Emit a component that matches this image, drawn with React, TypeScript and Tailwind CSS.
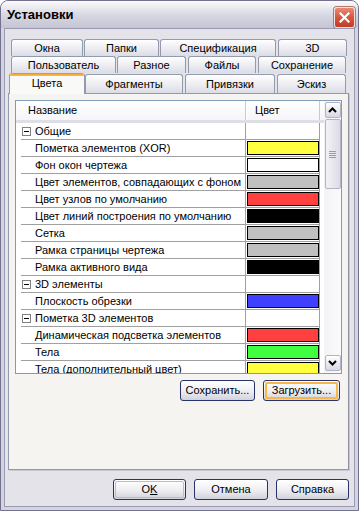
import React from "react";

type Row = { g?: boolean; t: string; c?: string };

const rows: Row[] = [
  { g: true, t: "Общие" },
  { t: "Пометка элементов (XOR)", c: "bg-[#ffff40]" },
  { t: "Фон окон чертежа", c: "bg-[#ffffff]" },
  { t: "Цвет элементов, совпадающих с фоном", c: "bg-[#c0c0c0]" },
  { t: "Цвет узлов по умолчанию", c: "bg-[#ff4040]" },
  { t: "Цвет линий построения по умолчанию", c: "bg-[#000000]" },
  { t: "Сетка", c: "bg-[#c0c0c0]" },
  { t: "Рамка страницы чертежа", c: "bg-[#c0c0c0]" },
  { t: "Рамка активного вида", c: "bg-[#000000]" },
  { g: true, t: "3D элементы" },
  { t: "Плоскость обрезки", c: "bg-[#4040ff]" },
  { g: true, t: "Пометка 3D элементов" },
  { t: "Динамическая подсветка элементов", c: "bg-[#ff4040]" },
  { t: "Тела", c: "bg-[#40ff40]" },
  { t: "Тела (дополнительный цвет)", c: "bg-[#ffff40]" },
];

function Tab({ label, cls }: { label: string; cls: string }) {
  return (
    <div
      className={`h-[17px] shrink-0 flex items-center justify-center rounded-t-[3px] border-x border-t border-[#919bac] bg-gradient-to-b from-white to-[#dcdce6] text-[11px] leading-none ${cls}`}
    >
      {label}
    </div>
  );
}

function Tab3({ label, cls }: { label: string; cls: string }) {
  return (
    <div
      className={`h-[19px] shrink-0 flex items-center justify-center rounded-t-[3px] border-x border-t border-[#919bac] bg-gradient-to-b from-white to-[#dcdce6] text-[11px] leading-none ${cls}`}
    >
      {label}
    </div>
  );
}

function Btn({ label, cls, inner }: { label: React.ReactNode; cls: string; inner?: string }) {
  return (
    <div
      className={`h-[21px] shrink-0 rounded-[3px] border border-[#27336a] bg-gradient-to-b from-white via-[#f0f0f4] to-[#d2d2dc] p-px ${cls}`}
    >
      <div
        className={`h-full w-full rounded-[2px] flex items-center justify-center text-[11px] leading-none ${inner ?? ""}`}
      >
        {label}
      </div>
    </div>
  );
}

function ScrollBtn({ up }: { up?: boolean }) {
  return (
    <div className="h-[16px] w-[16px] rounded-[2px] border border-[#b3b3c6] bg-gradient-to-b from-white to-[#d8d8e4] flex items-center justify-center">
      <svg width="9" height="6" viewBox="0 0 9 6">
        {up ? (
          <path d="M1 5 L4.5 1.5 L8 5" stroke="#000" strokeWidth="2" fill="none" />
        ) : (
          <path d="M1 1 L4.5 4.5 L8 1" stroke="#000" strokeWidth="2" fill="none" />
        )}
      </svg>
    </div>
  );
}

export default function App() {
  return (
    <div className="w-[359px] h-[511px] bg-white font-['Liberation_Sans',Arial,sans-serif] text-black">
      <div className="w-[359px] h-[511px] flex flex-col rounded-t-[8px] border border-[#72728f] bg-[#d4d4de] overflow-hidden">
        {/* title bar */}
        <div className="h-[27px] shrink-0 flex items-center pl-[6px] pr-[3px] bg-gradient-to-b from-[#fbfbfd] via-[#d9d9e4] to-[#c4c4d3]">
          <span className="text-[13px] font-bold leading-none">Установки</span>
          <div className="ml-auto mt-[5px] w-[21px] h-[21px] rounded-[3px] border border-[#f4e0dc] bg-gradient-to-b from-[#e98a70] via-[#d8553e] to-[#c33b25] flex items-center justify-center shadow-[0_0_0_1px_#b07a70]">
            <svg width="11" height="11" viewBox="0 0 11 11">
              <path d="M1.5 1.5 L9.5 9.5 M9.5 1.5 L1.5 9.5" stroke="#fff" strokeWidth="2.2" strokeLinecap="square" />
            </svg>
          </div>
        </div>
        {/* frame */}
        <div className="flex-1 flex flex-col px-[3px] pb-[3px]">
          <div className="flex-1 flex flex-col border border-[#9a9ab2] bg-[#e3e3e9] pt-[10px] pl-[3px] pr-[5px] pb-[6px]">
            {/* tabs */}
            <div className="flex pl-[3px]">
              <Tab label="Окна" cls="w-[72px]" />
              <Tab label="Папки" cls="w-[75px] ml-[1px]" />
              <Tab label="Спецификация" cls="w-[116px] ml-[1px]" />
              <Tab label="3D" cls="w-[69px] ml-[2px]" />
            </div>
            <div className="flex pl-[3px]">
              <Tab label="Пользователь" cls="w-[105px]" />
              <Tab label="Разное" cls="w-[69px] ml-[1px]" />
              <Tab label="Файлы" cls="w-[68px] ml-[2px]" />
              <Tab label="Сохранение" cls="w-[88px] ml-[2px]" />
            </div>
            <div className="flex items-end pl-[1px] relative z-10 -mb-px">
              <div className="h-[21px] w-[76px] shrink-0 rounded-t-[3px] border-x border-[#919bac] bg-[#f9f9f7] flex flex-col">
                <div className="h-[3px] rounded-t-[3px] bg-gradient-to-b from-[#e68b2c] to-[#ffc73c]" />
                <div className="flex-1 flex items-center justify-center text-[11px] leading-none pb-[3px]">Цвета</div>
              </div>
              <div className="flex-1 flex items-end mb-px">
                <Tab3 label="Фрагменты" cls="w-[98px]" />
                <Tab3 label="Привязки" cls="w-[90px] ml-[2px]" />
                <Tab3 label="Эскиз" cls="w-[69px] ml-[2px]" />
              </div>
            </div>
            {/* panel */}
            <div className="flex-1 flex flex-col border border-[#919bac] border-r-[#8f8f9f] bg-[#f5f4f0] px-[6px] pt-[6px] shadow-[1px_1px_0_#c9c9d3]">
              <div className="h-[274px] flex border border-[#7f9db9] bg-white">
                <div className="flex-1 flex flex-col overflow-hidden">
                  {/* header */}
                  <div className="h-[22px] shrink-0 flex border-b-[3px] border-[#dedee6] bg-gradient-to-b from-white to-[#f6f6f9]">
                    <div className="w-[230px] flex items-center pl-[12px] text-[11px] border-r border-[#c9c9d4]">Название</div>
                    <div className="w-[74px] flex items-center pl-[8px] text-[11px] border-r border-[#c9c9d4] border-l border-l-white">Цвет</div>
                    <div className="flex-1" />
                  </div>
                  {rows.map((r, i) => (
                    <div key={i} className="h-[17px] shrink-0 flex">
                      <div className="w-[5px] shrink-0" />
                      <div className="w-[225px] shrink-0 flex items-center border-b border-r border-[#a0a0a0] overflow-hidden whitespace-nowrap text-[11px] leading-none">
                        {r.g ? (
                          <>
                            <div className="w-[9px] h-[9px] ml-[1px] shrink-0 border border-[#808080] flex items-center justify-center">
                              <div className="w-[5px] h-px bg-black" />
                            </div>
                            <span className="ml-[4px]">{r.t}</span>
                          </>
                        ) : (
                          <span className="ml-[14px]">{r.t}</span>
                        )}
                      </div>
                      <div className="w-[74px] shrink-0 border-b border-r border-[#a0a0a0] pl-[1px] py-px">
                        {r.c ? <div className={`h-[14px] w-full border border-black ${r.c}`} /> : null}
                      </div>
                      <div className="flex-1" />
                    </div>
                  ))}
                </div>
                {/* scrollbar */}
                <div className="w-[17px] shrink-0 flex flex-col items-center bg-gradient-to-r from-[#f3f3f7] to-[#fbfbfd] py-px">
                  <ScrollBtn up />
                  <div className="mt-px h-[70px] w-[16px] rounded-[2px] border border-[#b3b3c6] bg-gradient-to-r from-[#f2f2f6] to-[#dcdce6] flex flex-col items-center justify-center gap-px">
                    <div className="w-[7px] h-px bg-[#9a9ab0]" />
                    <div className="w-[7px] h-px bg-[#9a9ab0]" />
                    <div className="w-[7px] h-px bg-[#9a9ab0]" />
                    <div className="w-[7px] h-px bg-[#9a9ab0]" />
                  </div>
                  <div className="flex-1" />
                  <div className="mb-px">
                    <ScrollBtn />
                  </div>
                </div>
              </div>
              <div className="flex justify-end gap-[8px] mt-[6px] pr-[2px]">
                <Btn label="Сохранить..." cls="w-[75px]" />
                <Btn
                  label="Загрузить..."
                  cls="w-[77px]"
                  inner="border-2 border-[#f8b847] rounded-[2px]"
                />
              </div>
            </div>
            {/* bottom buttons */}
            <div className="flex justify-end gap-[8px] mt-[9px]">
              <Btn
                label={
                  <span>
                    O<span className="underline">K</span>
                  </span>
                }
                cls="w-[73px]"
                inner="border border-[#a9c1ea]"
              />
              <Btn label="Отмена" cls="w-[74px]" />
              <Btn label="Справка" cls="w-[73px]" />
            </div>
          </div>
        </div>
      </div>
    </div>
  );
}
